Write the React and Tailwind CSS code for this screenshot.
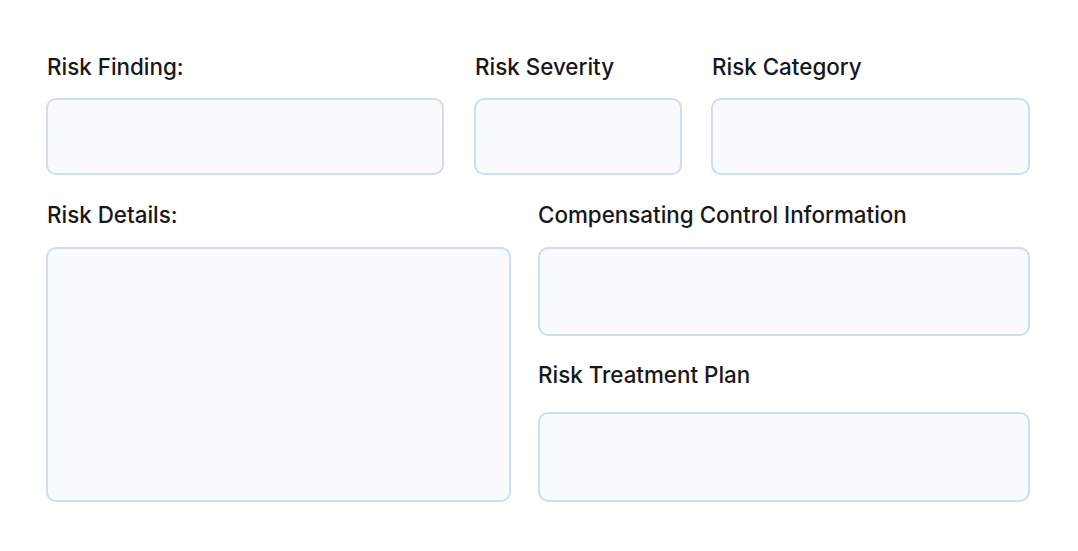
import React from "react";

const box = "rounded-[10px] border-2 border-[#cfdcf3] bg-[#f8fafc]";
const label = "text-[22.4px] leading-7 font-medium text-[#18181a]";

export default function App() {
  return (
    <div
      className="w-[1078px] h-[551px] bg-white pl-[46px] pt-[53px]"
      style={{ fontFamily: "Inter, 'Noto Sans', sans-serif" }}
    >
      <div className="flex">
        <div className="flex flex-col w-[398px] mr-[30px]">
          <div className={`${label} pl-[1px] mb-[17px]`}>Risk Finding:</div>
          <div className={`${box} h-[77px]`} />
        </div>
        <div className="flex flex-col w-[208px] mr-[29px]">
          <div className={`${label} pl-[1px] mb-[17px]`}>Risk Severity</div>
          <div className={`${box} h-[77px]`} />
        </div>
        <div className="flex flex-col w-[319px]">
          <div className={`${label} pl-[1px] mb-[17px]`}>Risk Category</div>
          <div className={`${box} h-[77px]`} />
        </div>
      </div>
      <div className="flex mt-[26px]">
        <div className="flex flex-col w-[465px] mr-[27px]">
          <div className={`${label} pl-[1px] mb-[18px]`}>Risk Details:</div>
          <div className={`${box} h-[255px]`} />
        </div>
        <div className="flex flex-col w-[492px]">
          <div className={`${label} mb-[18px]`}>Compensating Control Information</div>
          <div className={`${box} h-[89px]`} />
          <div className={`${label} mt-[25px] mb-[23px]`}>Risk Treatment Plan</div>
          <div className={`${box} h-[90px]`} />
        </div>
      </div>
    </div>
  );
}
